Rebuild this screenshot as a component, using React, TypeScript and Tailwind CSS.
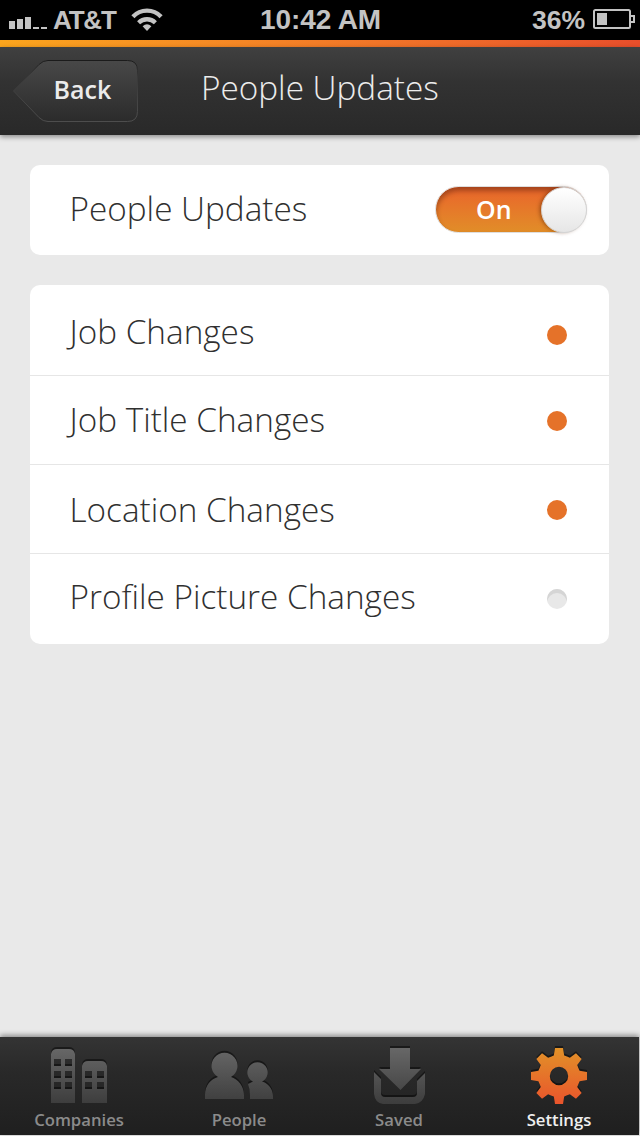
import type { ReactNode } from "react";

const rows = [
  { label: "Job Changes", on: true, row: "h-[91px] border-b", text: "mt-[21px]", dot: "mt-[40px]" },
  { label: "Job Title Changes", on: true, row: "h-[89px] border-b", text: "mt-[18px]", dot: "mt-[35px]" },
  { label: "Location Changes", on: true, row: "h-[89px] border-b", text: "mt-[19px]", dot: "mt-[35px]" },
  { label: "Profile Picture Changes", on: false, row: "h-[90px]", text: "mt-[17px]", dot: "mt-[35px]" },
];

function gearPath(cx: number, cy: number) {
  const tooth = [
    [-5.2, -20.6],
    [-4, -28],
    [4, -28],
    [5.2, -20.6],
    [8, -19.4],
  ];
  const points: string[] = [];
  for (let i = 0; i < 8; i++) {
    const a = (i * Math.PI) / 4;
    for (const [x, y] of tooth) {
      const px = cx + x * Math.cos(a) - y * Math.sin(a);
      const py = cy + x * Math.sin(a) + y * Math.cos(a);
      points.push(`${px.toFixed(2)} ${py.toFixed(2)}`);
    }
  }
  return `M${points.join("L")}ZM${cx - 9.2} ${cy}a9.2 9.2 0 1 0 18.4 0a9.2 9.2 0 1 0 -18.4 0Z`;
}

function StatusBar() {
  return (
    <div className="flex h-10 bg-black font-['Liberation_Sans',sans-serif] font-bold text-[#c3c3c3]">
      <div className="flex w-[260px] pl-[9px]">
        <svg width="40" height="40" fill="#c3c3c3">
          <path d="M0 21h6v8H0zM8 19h6v10H8zM16 17h6v12h-6zM24 27h6v2h-6zM32 27h6v2h-6z" />
        </svg>
        <span className="ml-[4px] w-[64px] text-[26px] leading-10 tracking-[-1.2px]">AT&amp;T</span>
        <svg width="34" height="40" className="ml-[14px]" fill="none" stroke="#c3c3c3">
          <path d="M1.9 16.7A19.5 19.5 0 0 1 30.1 16.7" strokeWidth="4.3" />
          <path d="M7.6 22.7A12 12 0 0 1 24.4 22.7" strokeWidth="4.3" />
          <path d="M16 31L11.6 26.3Q16 22.3 20.4 26.3Z" fill="#c3c3c3" stroke="none" />
        </svg>
      </div>
      <span className="w-[122px] whitespace-nowrap text-[28px] leading-10 tracking-[-0.1px]">10:42 AM</span>
      <span className="ml-[150px] w-[54px] text-[26.5px] leading-10">36%</span>
      <svg width="44" height="40" className="ml-[7px]" fill="none" stroke="#c3c3c3" strokeWidth="2">
        <rect x="1" y="10" width="36" height="18" rx="1.5" />
        <path d="M37 16h4v6h-4" />
        <path d="M4 13h10v12H4z" fill="#c3c3c3" stroke="none" />
      </svg>
    </div>
  );
}

function Header() {
  return (
    <header className="z-10 flex h-[88px] bg-linear-to-b from-[#404040] via-[#323232] via-40% to-[#292929] shadow-[0_2px_5px_rgba(0,0,0,0.4)]">
      <button className="ml-[12px] mt-[12px] grid h-[64px] w-[128px]">
        <svg width="128" height="64" className="col-start-1 row-start-1">
          <defs>
            <linearGradient id="back" x1="0" y1="0" x2="0" y2="1">
              <stop offset="0" stopColor="#484848" />
              <stop offset="1" stopColor="#2b2b2b" />
            </linearGradient>
            <linearGradient id="backEdge" x1="0" y1="0" x2="0" y2="1">
              <stop offset="0" stopColor="#1b1b1b" />
              <stop offset="0.25" stopColor="#383838" />
              <stop offset="1" stopColor="#4d4d4d" />
            </linearGradient>
          </defs>
          <path
            d="M1.5 32L27 5.5Q31 1.5 36 1.5H115.5Q125.5 1.5 125.5 11.5V52.5Q125.5 62.5 115.5 62.5H36Q31 62.5 27 58.5Z"
            fill="url(#back)"
            stroke="url(#backEdge)"
          />
        </svg>
        <span className="col-start-1 row-start-1 mt-[10px] ml-[41.5px] text-left text-[25px] leading-[40px] font-semibold text-[#ebebeb]">
          Back
        </span>
      </button>
      <h1 className="mt-[16px] ml-[61px] text-[33.3px] leading-[49px] font-light whitespace-nowrap text-[#ececec]">
        People Updates
      </h1>
    </header>
  );
}

function Toggle() {
  return (
    <button className="mt-[21px] flex h-[47px] w-[152px] justify-end rounded-full border border-[#dedede] bg-linear-to-b from-[#e9632b] to-[#e18d28] shadow-[inset_0_4px_5px_rgba(80,30,10,0.45)]">
      <span className="mt-[2px] w-[65px] text-left text-[25px] leading-[40px] font-semibold text-white">On</span>
      <span className="-mr-px size-[46px] rounded-full border border-[#d4d4d4] bg-linear-to-b from-white to-[#e6e6e6] shadow-[-2px_0_4px_-1px_rgba(90,35,0,0.6)]" />
    </button>
  );
}

function Tab({ label, active, width, children }: { label: string; active?: boolean; width: string; children: ReactNode }) {
  return (
    <div className={`flex shrink-0 flex-col items-center ${width}`}>
      <svg width="80" height="70" className="drop-shadow-[0_-2px_0_rgba(0,0,0,0.45)]">
        {children}
      </svg>
      <span className={`text-[16.7px] leading-[26px] font-semibold ${active ? "text-[#efefef]" : "text-[#8b8b8b]"}`}>{label}</span>
    </div>
  );
}

export default function App() {
  return (
    <div className="flex h-[1136px] w-[640px] flex-col overflow-hidden bg-[#e9e9e9] font-['Open_Sans',sans-serif]">
      <StatusBar />
      <div className="h-[7px] bg-linear-to-r from-[#fba51d] to-[#e84e2b]" />
      <Header />
      <main className="flex grow flex-col gap-[30px] pt-[30px] pl-[30px] text-[33.3px] leading-[50px] font-light text-[#303030]">
        <section className="flex h-[90px] w-[579px] justify-between rounded-[10px] bg-white pr-[22px] pl-[39.5px]">
          <span className="mt-[18px]">People Updates</span>
          <Toggle />
        </section>
        <section className="w-[579px] overflow-hidden rounded-[10px] bg-white">
          {rows.map((r) => (
            <div key={r.label} className={`flex justify-between border-[#e6e6e6] pr-[42px] pl-[39.5px] ${r.row}`}>
              <span className={r.text}>{r.label}</span>
              <span
                className={`size-[20px] rounded-full ${r.dot} ${r.on ? "bg-[#e57229]" : "bg-[#e8e8e8] shadow-[inset_0_4px_0_#d5d5d5]"}`}
              />
            </div>
          ))}
        </section>
      </main>
      <nav className="mb-px flex h-[98px] w-[639px] bg-linear-to-b from-[#343434] via-[#292929] via-35% to-[#1f1f1f] shadow-[0_-2px_5px_rgba(0,0,0,0.4)]">
        <svg width="0" height="0">
          <defs>
            <linearGradient id="gray" gradientUnits="userSpaceOnUse" x1="0" y1="10" x2="0" y2="68">
              <stop offset="0" stopColor="#686868" />
              <stop offset="1" stopColor="#3c3c3c" />
            </linearGradient>
            <linearGradient id="orange" gradientUnits="userSpaceOnUse" x1="0" y1="11" x2="0" y2="67">
              <stop offset="0" stopColor="#e29228" />
              <stop offset="1" stopColor="#e9542c" />
            </linearGradient>
          </defs>
        </svg>
        <Tab label="Companies" width="w-[158px]">
          <path
            fill="url(#gray)"
            fillRule="evenodd"
            d="M12 66V17Q13 12 18 12H30Q35 12 36 17V66ZM15 22v7h7v-7zM26 22v7h7v-7zM15 34v7h7v-7zM26 34v7h7v-7zM15 45v7h7v-7zM26 45v7h7v-7zM43 66V29Q44 24 49 24H62Q67 24 68 29V66ZM46 34v7h7v-7zM58 34v7h7v-7zM46 45v7h7v-7zM58 45v7h7v-7z"
          />
        </Tab>
        <Tab label="People" width="w-[162px]">
          <g fill="url(#gray)">
            <path d="M6 62V58C6 48 12 42 19 40A13 13 0 1 1 32 40C39 42 45 49 45 58V62Z" />
            <path d="M51 62V58Q51 52 49 47L54 44.5A10.2 10.2 0 1 1 63 44.5C69 46 74 52 74 59V62Z" />
          </g>
        </Tab>
        <Tab label="Saved" width="w-[158px]">
          <g fill="url(#gray)">
            <path d="M31 11H51V32H62L41.5 53L20 32H31Z" />
            <path d="M15 35L22 42V56Q22 60 26 60H54Q58 60 58 56V44L66 36V57Q64 66 56 67H24Q16 66 15 57Z" />
          </g>
        </Tab>
        <Tab label="Settings" width="w-[162px]" active>
          <path d={gearPath(40, 39)} fill="url(#orange)" fillRule="evenodd" />
        </Tab>
      </nav>
    </div>
  );
}
